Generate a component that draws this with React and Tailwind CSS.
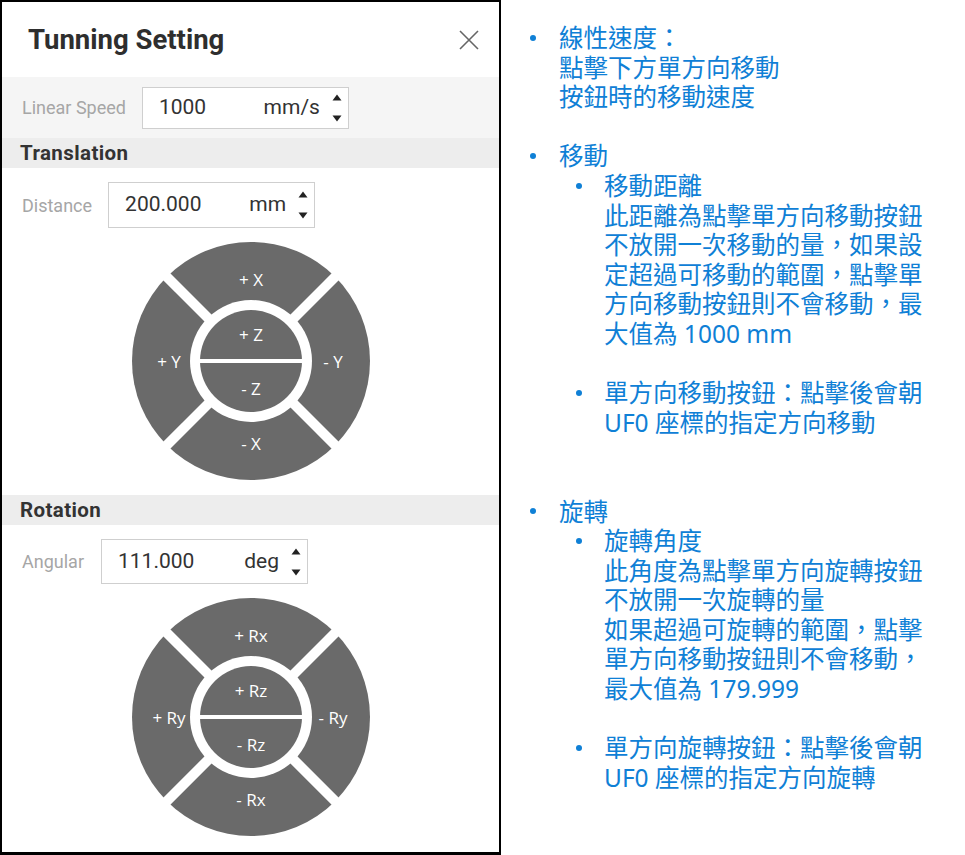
import React from 'react';

const PANEL_FONT = { fontFamily: 'Roboto, "Liberation Sans", sans-serif' };
const NOTE_FONT = { fontFamily: '"Noto Sans", "Noto Sans CJK TC", sans-serif' };

// small up/down arrows on the right of each number box
const Spinner = () => (
  <svg width="10" height="30" viewBox="0 0 10 30" className="shrink-0">
    <path d="M0.5 7.5 L5 1.5 L9.5 7.5 Z" fill="#222" />
    <path d="M0.5 22.5 L5 28.5 L9.5 22.5 Z" fill="#222" />
  </svg>
);

const NumberBox = ({ value, unit, height }) => (
  <div
    className="flex items-center w-[207px] border border-[#cfcfcf] bg-white pl-[16px] pr-[6px] text-[21px] text-[#333]"
    style={{ height }}
  >
    <span className="flex-1">{value}</span>
    <span>{unit}</span>
    <span className="ml-[12px] flex items-center">
      <Spinner />
    </span>
  </div>
);

const SectionHeader = ({ title }) => (
  <div className="h-[30px] bg-[#ededed] flex items-center pl-[18px] text-[20.5px] font-bold tracking-[0.4px] text-[#333]">
    {title}
  </div>
);

// round jog pad: four outer segments and a split centre button
const JogPad = ({ top, bottom, left, right, up, down }) => {
  const dark = '#6a6a6a';
  const label = { fontFamily: '"Open Sans", "Noto Sans", sans-serif', fontSize: 17, fill: '#fff' };
  return (
    <svg width="240" height="240" viewBox="0 0 240 240">
      <circle cx="120" cy="120" r="119" fill={dark} />
      <line x1="20" y1="20" x2="220" y2="220" stroke="#fff" strokeWidth="10" />
      <line x1="220" y1="20" x2="20" y2="220" stroke="#fff" strokeWidth="10" />
      <circle cx="120" cy="120" r="61" fill="#fff" />
      <circle cx="120" cy="120" r="51" fill={dark} />
      <rect x="66" y="118" width="108" height="4" fill="#fff" />
      <text x="120" y="38" textAnchor="middle" dominantBaseline="central" style={label}>{top}</text>
      <text x="120" y="202" textAnchor="middle" dominantBaseline="central" style={label}>{bottom}</text>
      <text x="38" y="120" textAnchor="middle" dominantBaseline="central" style={label}>{left}</text>
      <text x="202" y="120" textAnchor="middle" dominantBaseline="central" style={label}>{right}</text>
      <text x="120" y="93" textAnchor="middle" dominantBaseline="central" style={label}>{up}</text>
      <text x="120" y="147" textAnchor="middle" dominantBaseline="central" style={label}>{down}</text>
    </svg>
  );
};

const TuningPanel = () => (
  <div className="w-[501px] h-[855px] shrink-0 border-2 border-b-[3px] border-black bg-white flex flex-col" style={PANEL_FONT}>
    <div className="h-[75px] flex items-center justify-between pl-[26px] pr-[20px]">
      <span className="text-[27.5px] font-bold text-[#2e2e2e]">Tunning Setting</span>
      <svg width="20" height="20" viewBox="0 0 20 20">
        <path d="M1 1 L19 19 M19 1 L1 19" stroke="#666" strokeWidth="1.6" />
      </svg>
    </div>

    <div className="h-[61px] bg-[#f5f5f5] flex items-center gap-[16px] pl-[20px]">
      <span className="text-[18px] text-[#a6a6a6]">Linear Speed</span>
      <NumberBox value="1000" unit="mm/s" height={42} />
    </div>

    <SectionHeader title="Translation" />
    <div className="flex items-center gap-[16px] pl-[20px] pt-[14px]">
      <span className="text-[18px] text-[#a6a6a6]">Distance</span>
      <NumberBox value="200.000" unit="mm" height={46} />
    </div>
    <div className="flex justify-center mt-[13px] mb-[14px]">
      <JogPad top="+ X" bottom="- X" left="+ Y" right="- Y" up="+ Z" down="- Z" />
    </div>

    <SectionHeader title="Rotation" />
    <div className="flex items-center gap-[17px] pl-[20px] pt-[14px]">
      <span className="text-[18px] text-[#a6a6a6]">Angular</span>
      <NumberBox value="111.000" unit="deg" height={45} />
    </div>
    <div className="flex justify-center mt-[13px]">
      <JogPad top="+ Rx" bottom="- Rx" left="+ Ry" right="- Ry" up="+ Rz" down="- Rz" />
    </div>
  </div>
);

const Dot = () => <span className="block w-[6px] h-[6px] rounded-full bg-[#0f80d6]" />;

const Note = ({ level = 1, lines }) => (
  <div className={`flex ${level === 2 ? 'ml-[46px]' : ''}`}>
    <div className={`${level === 2 ? 'w-[28px]' : 'w-[29px]'} h-[29.6px] flex items-center shrink-0`}>
      <Dot />
    </div>
    <div>
      {lines.map((l, i) => (
        <div key={i} className="whitespace-nowrap">{l}</div>
      ))}
    </div>
  </div>
);

const Gap = ({ rows = 1 }) => <div style={{ height: rows * 29.6 }} />;

const Notes = () => (
  <div className="pl-[29px] pt-[23px] text-[24.5px] leading-[29.6px] text-[#0f80d6]" style={NOTE_FONT}>
    <Note lines={['線性速度：', '點擊下方單方向移動', '按鈕時的移動速度']} />
    <Gap />
    <Note lines={['移動']} />
    <Note
      level={2}
      lines={[
        '移動距離',
        '此距離為點擊單方向移動按鈕',
        '不放開一次移動的量，如果設',
        '定超過可移動的範圍，點擊單',
        '方向移動按鈕則不會移動，最',
        '大值為 1000 mm',
      ]}
    />
    <Gap />
    <Note level={2} lines={['單方向移動按鈕：點擊後會朝', 'UF0 座標的指定方向移動']} />
    <Gap rows={2} />
    <Note lines={['旋轉']} />
    <Note
      level={2}
      lines={[
        '旋轉角度',
        '此角度為點擊單方向旋轉按鈕',
        '不放開一次旋轉的量',
        '如果超過可旋轉的範圍，點擊',
        '單方向移動按鈕則不會移動，',
        '最大值為 179.999',
      ]}
    />
    <Gap />
    <Note level={2} lines={['單方向旋轉按鈕：點擊後會朝', 'UF0 座標的指定方向旋轉']} />
  </div>
);

export default function App() {
  return (
    <div className="w-[965px] h-[855px] bg-white flex overflow-hidden">
      <TuningPanel />
      <Notes />
    </div>
  );
}
